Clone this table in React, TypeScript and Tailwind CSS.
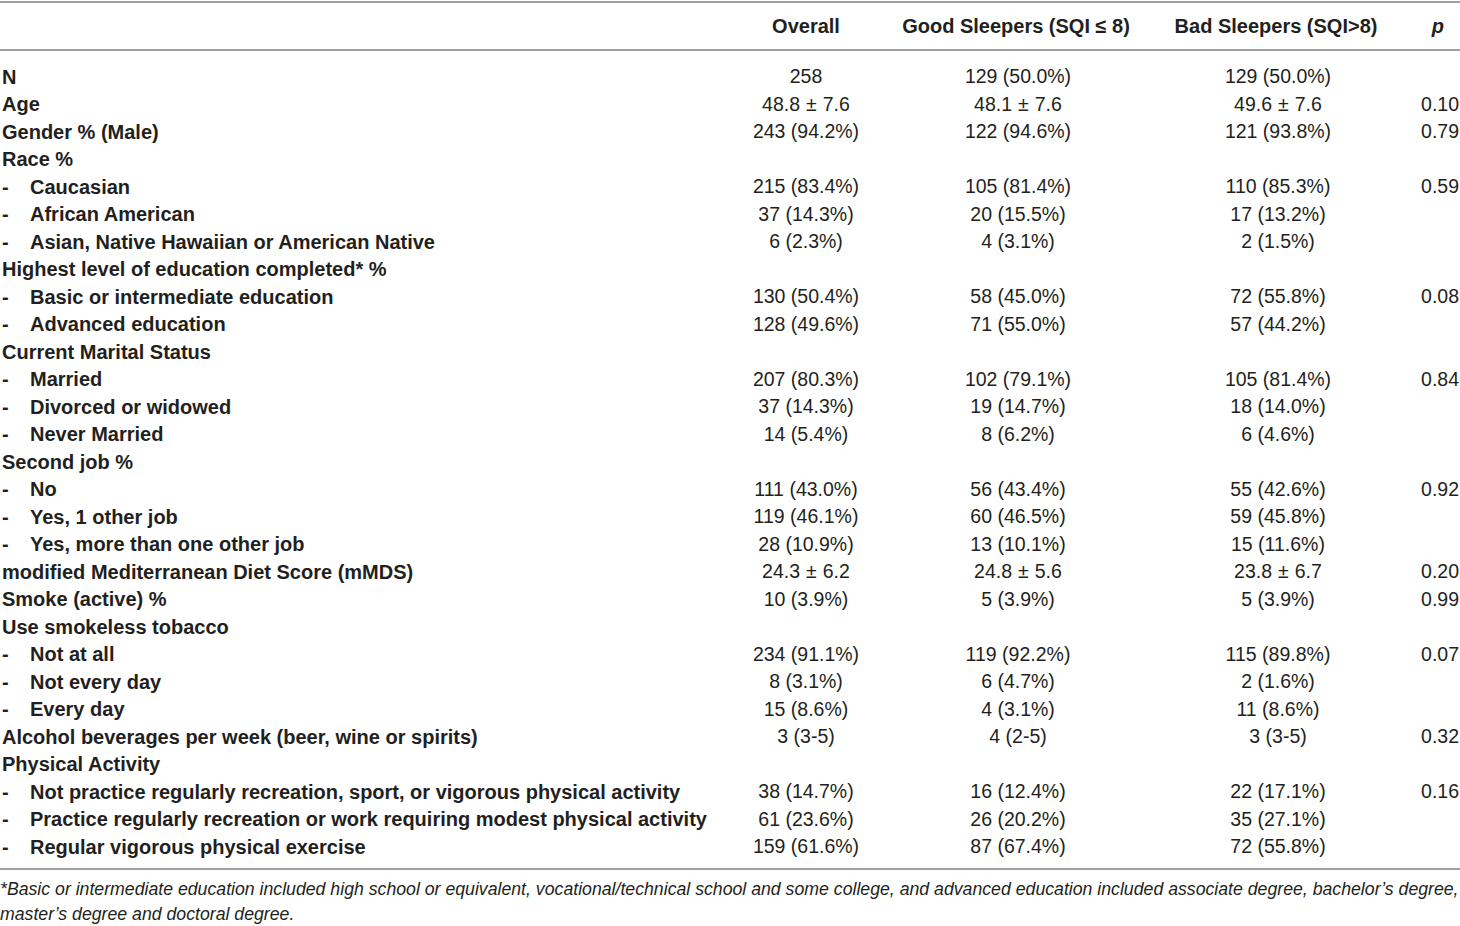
import React from 'react';

type Row = {
  label: string;
  sub?: boolean;
  overall?: string;
  good?: string;
  bad?: string;
  p?: string;
};

const rows: Row[] = [
  { label: 'N', overall: '258', good: '129 (50.0%)', bad: '129 (50.0%)' },
  { label: 'Age', overall: '48.8 ± 7.6', good: '48.1 ± 7.6', bad: '49.6 ± 7.6', p: '0.10' },
  { label: 'Gender % (Male)', overall: '243 (94.2%)', good: '122 (94.6%)', bad: '121 (93.8%)', p: '0.79' },
  { label: 'Race %' },
  { label: 'Caucasian', sub: true, overall: '215 (83.4%)', good: '105 (81.4%)', bad: '110 (85.3%)', p: '0.59' },
  { label: 'African American', sub: true, overall: '37 (14.3%)', good: '20 (15.5%)', bad: '17 (13.2%)' },
  { label: 'Asian, Native Hawaiian or American Native', sub: true, overall: '6 (2.3%)', good: '4 (3.1%)', bad: '2 (1.5%)' },
  { label: 'Highest level of education completed* %' },
  { label: 'Basic or intermediate education', sub: true, overall: '130 (50.4%)', good: '58 (45.0%)', bad: '72 (55.8%)', p: '0.08' },
  { label: 'Advanced education', sub: true, overall: '128 (49.6%)', good: '71 (55.0%)', bad: '57 (44.2%)' },
  { label: 'Current Marital Status' },
  { label: 'Married', sub: true, overall: '207 (80.3%)', good: '102 (79.1%)', bad: '105 (81.4%)', p: '0.84' },
  { label: 'Divorced or widowed', sub: true, overall: '37 (14.3%)', good: '19 (14.7%)', bad: '18 (14.0%)' },
  { label: 'Never Married', sub: true, overall: '14 (5.4%)', good: '8 (6.2%)', bad: '6 (4.6%)' },
  { label: 'Second job %' },
  { label: 'No', sub: true, overall: '111 (43.0%)', good: '56 (43.4%)', bad: '55 (42.6%)', p: '0.92' },
  { label: 'Yes, 1 other job', sub: true, overall: '119 (46.1%)', good: '60 (46.5%)', bad: '59 (45.8%)' },
  { label: 'Yes, more than one other job', sub: true, overall: '28 (10.9%)', good: '13 (10.1%)', bad: '15 (11.6%)' },
  { label: 'modified Mediterranean Diet Score (mMDS)', overall: '24.3 ± 6.2', good: '24.8 ± 5.6', bad: '23.8 ± 6.7', p: '0.20' },
  { label: 'Smoke (active) %', overall: '10 (3.9%)', good: '5 (3.9%)', bad: '5 (3.9%)', p: '0.99' },
  { label: 'Use smokeless tobacco' },
  { label: 'Not at all', sub: true, overall: '234 (91.1%)', good: '119 (92.2%)', bad: '115 (89.8%)', p: '0.07' },
  { label: 'Not every day', sub: true, overall: '8 (3.1%)', good: '6 (4.7%)', bad: '2 (1.6%)' },
  { label: 'Every day', sub: true, overall: '15 (8.6%)', good: '4 (3.1%)', bad: '11 (8.6%)' },
  { label: 'Alcohol beverages per week (beer, wine or spirits)', overall: '3 (3-5)', good: '4 (2-5)', bad: '3 (3-5)', p: '0.32' },
  { label: 'Physical Activity' },
  { label: 'Not practice regularly recreation, sport, or vigorous physical activity', sub: true, overall: '38 (14.7%)', good: '16 (12.4%)', bad: '22 (17.1%)', p: '0.16' },
  { label: 'Practice regularly recreation or work requiring modest physical activity', sub: true, overall: '61 (23.6%)', good: '26 (20.2%)', bad: '35 (27.1%)' },
  { label: 'Regular vigorous physical exercise', sub: true, overall: '159 (61.6%)', good: '87 (67.4%)', bad: '72 (55.8%)' },
];

// widen the "±" the way the printed table does
function Value({ text }: { text?: string }) {
  if (!text) return null;
  const parts = text.split(' ± ');
  if (parts.length < 2) return <>{text}</>;
  return (
    <>
      {parts[0]}
      <span className="mx-[6px]">±</span>
      {parts[1]}
    </>
  );
}

export default function App() {
  return (
    <div className="w-[1460px] h-[926px] bg-white text-[#231f20] font-['Liberation_Sans',Arial,sans-serif]">
      <div className="pt-px">
        <div className="border-t-2 border-b-2 border-[#a0a0a0] h-[50px] flex items-center text-[20px] font-bold whitespace-nowrap">
          <div className="w-[702px] shrink-0" />
          <div className="w-[208px] shrink-0 flex justify-center">Overall</div>
          <div className="w-[212px] shrink-0 flex justify-center">Good Sleepers (SQI ≤ 8)</div>
          <div className="w-[308px] shrink-0 flex justify-center">Bad Sleepers (SQI&gt;8)</div>
          <div className="flex-1 min-w-0 flex justify-end italic pr-[16px]">p</div>
        </div>
        <div className="pt-[12px] pb-[7px] border-b-2 border-[#a0a0a0]">
          {rows.map((r) => (
            <div key={r.label} className="h-[27.5px] flex items-center text-[19.5px] whitespace-nowrap">
              <div className="w-[702px] shrink-0 flex font-bold text-[20px] pl-[2px]">
                {r.sub && <span className="w-[28px] shrink-0">-</span>}
                <span>{r.label}</span>
              </div>
              <div className="w-[208px] shrink-0 text-center"><Value text={r.overall} /></div>
              <div className="w-[216px] shrink-0 text-center"><Value text={r.good} /></div>
              <div className="w-[304px] shrink-0 text-center"><Value text={r.bad} /></div>
              <div className="flex-1 min-w-0 flex justify-end pr-px">{r.p}</div>
            </div>
          ))}
        </div>
        <p className="pt-[7px] text-[17.7px] leading-[25px] italic whitespace-nowrap">
          *Basic or intermediate education included high school or equivalent, vocational/technical school and some college, and advanced education included associate degree, bachelor’s degree,
          <br />
          master’s degree and doctoral degree.
        </p>
      </div>
    </div>
  );
}
